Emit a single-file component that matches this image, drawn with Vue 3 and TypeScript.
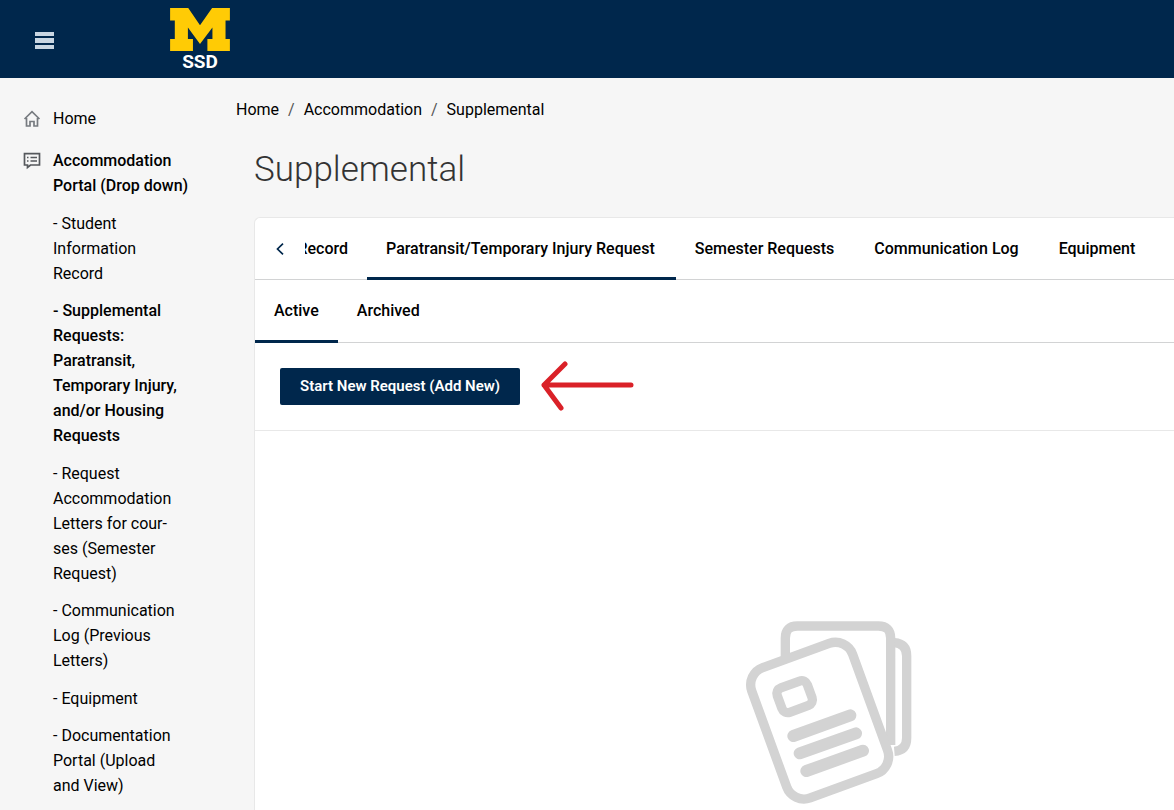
<script setup lang="ts">
import { ref } from 'vue'

interface NavItem {
  label: string
  current?: boolean
}

const portalItems: NavItem[] = [
  { label: '- Student Information Record' },
  { label: '- Supplemental Requests: Paratransit, Temporary Injury, and/or Housing Requests', current: true },
  { label: '- Request Accommodation Letters for cour\u00ADses (Semester Request)' },
  { label: '- Communication Log (Previous Letters)' },
  { label: '- Equipment' },
  { label: '- Documentation Portal (Upload and View)' },
]

const tabs = [
  'Paratransit/Temporary Injury Request',
  'Semester Requests',
  'Communication Log',
  'Equipment',
]
const activeTab = ref(tabs[0])

const subTabs = ['Active', 'Archived']
const activeSubTab = ref(subTabs[0])
</script>

<template>
  <div class="page">
    <header class="topbar">
      <button class="menu-button" type="button" aria-label="Menu">
        <svg width="19" height="17" viewBox="0 0 19 17" aria-hidden="true">
          <path d="M0 0H19V4H0ZM0 6H19V11H0ZM0 13H19V17H0Z" />
        </svg>
      </button>
      <a class="logo" href="#" aria-label="SSD home">
        <svg width="60" height="43" viewBox="512 24 178 128" aria-hidden="true">
          <path
            d="M512 24H566L601 75L637 24H690V61H677V116H690V152H623V116H638V82L601 131L565 82V116H580V152H512V116H526V61H512Z"
          />
        </svg>
        <span>SSD</span>
      </a>
    </header>

    <div class="body">
      <nav class="sidebar" aria-label="Main">
        <a class="nav-link" href="#">
          <svg class="nav-icon home" width="18" height="18" viewBox="0 0 18 18" aria-hidden="true">
            <path d="M1.500 9L9 1.700L16.500 9M3.500 8V16H7V11.500H11V16H14.500V8" />
          </svg>
          <span>Home</span>
        </a>
        <a class="nav-link strong" href="#">
          <svg class="nav-icon" width="18" height="18" viewBox="0 0 18 18" aria-hidden="true">
            <path d="M1.500 1.700H16.500V13H7.500L4.500 15.500V13H1.500Z" />
            <path d="M4 5.500H5.500M7.500 5.500H14M4 9H5.500M7.500 9H14" />
          </svg>
          <span>Accommodation Portal (Drop down)</span>
        </a>
        <ul class="sub-nav">
          <li v-for="item in portalItems" :key="item.label">
            <a href="#" :class="{ strong: item.current }">{{ item.label }}</a>
          </li>
        </ul>
      </nav>

      <main class="content">
        <nav class="breadcrumb" aria-label="Breadcrumb">
          <a href="#">Home</a>
          <span class="slash">/</span>
          <a href="#">Accommodation</a>
          <span class="slash">/</span>
          <a href="#">Supplemental</a>
        </nav>
        <h1>Supplemental</h1>

        <section class="card">
          <div class="tabs main-tabs">
            <button class="scroll-button" type="button" aria-label="Previous tabs">
              <svg width="8" height="12" viewBox="0 0 8 12" aria-hidden="true">
                <path d="M7 0.700L1.500 6L7 11.300" />
              </svg>
            </button>
            <button class="tab clipped" type="button"><span>Record</span></button>
            <button
              v-for="tab in tabs"
              :key="tab"
              class="tab"
              :class="{ active: tab === activeTab }"
              type="button"
              @click="activeTab = tab"
            >
              {{ tab }}
            </button>
          </div>
          <div class="tabs sub-tabs">
            <button
              v-for="tab in subTabs"
              :key="tab"
              class="tab"
              :class="{ active: tab === activeSubTab }"
              type="button"
              @click="activeSubTab = tab"
            >
              {{ tab }}
            </button>
          </div>
          <div class="actions">
            <button class="primary" type="button">Start New Request (Add New)</button>
            <svg class="arrow" width="96" height="52" viewBox="0 0 96 52" aria-hidden="true">
              <path d="M91 24H4M25 3L4 24L21 47" />
            </svg>
          </div>
          <div class="empty">
            <svg width="190" height="200" viewBox="0 0 570 600" aria-hidden="true">
              <path d="M151 142V84Q151 48 187 48H430Q467 48 467 84V405" />
              <path d="M478 98Q515 101 515 138V384Q515 421 478 424" />
              <g transform="translate(254 332) rotate(-20)">
                <rect x="-161" y="-208" width="322" height="416" rx="55" />
              </g>
              <g transform="translate(179 260) rotate(-20)">
                <rect x="-48" y="-39" width="96" height="78" rx="18" />
              </g>
              <path class="lines" d="M175 378L346 316M194 430L363 370M214 483L384 422" />
            </svg>
          </div>
        </section>
      </main>
    </div>
  </div>
</template>

<style>
body {
  margin: 0;
  background: #f6f6f6;
}
</style>

<style scoped>
.page {
  display: flex;
  flex-direction: column;
  height: 100vh;
  overflow: hidden;
  background: #f6f6f6;
  color: #000;
  font-family: Roboto, "Liberation Sans", sans-serif;
  font-size: 16px;
  line-height: 25px;
}

a {
  color: inherit;
  text-decoration: none;
}

button {
  border: 0;
  padding: 0;
  background: none;
  color: inherit;
  font: inherit;
  cursor: pointer;
}

svg {
  flex: none;
  display: block;
}

.topbar {
  display: flex;
  align-items: center;
  flex: none;
  height: 78px;
  padding-left: 35px;
  background: #00274c;
}

.menu-button {
  margin-top: 3px;
  fill: #c9d6e2;
}

.logo {
  display: flex;
  flex-direction: column;
  align-items: center;
  align-self: flex-start;
  margin-left: 116px;
  padding-top: 8px;
  color: #fff;
  font-size: 19px;
  font-weight: 700;
  line-height: 22px;
}

.logo svg {
  fill: #ffcb05;
}

.body {
  display: flex;
  flex: 1;
  min-height: 0;
}

.sidebar {
  flex: none;
  box-sizing: border-box;
  width: 236px;
  padding: 28px 40px 0 23px;
}

.nav-link {
  display: flex;
  gap: 12px;
  margin-bottom: 17px;
}

.nav-icon {
  margin-top: 4px;
  fill: none;
  stroke: #55585c;
  stroke-width: 1.7;
}

.nav-icon.home {
  stroke: #777b80;
}

.strong {
  font-weight: 500;
}

.sub-nav {
  margin: -4px 0 0;
  padding: 0 12px 0 30px;
  list-style: none;
}

.sub-nav li {
  margin-bottom: 12px;
}

.sub-nav li:nth-child(even) {
  margin-bottom: 13px;
}

.content {
  flex: 1;
  display: flex;
  flex-direction: column;
  min-width: 0;
}

.breadcrumb {
  display: flex;
  gap: 9px;
  padding-top: 19px;
}

.slash {
  color: #555;
}

h1 {
  margin: 26px 0 25px 18px;
  color: #333;
  font-size: 35px;
  font-weight: 300;
  line-height: 44px;
}

.card {
  flex: 1;
  margin-left: 18px;
  border: 1px solid #e8e8e8;
  border-right: 0;
  border-bottom: 0;
  border-radius: 6px 0 0 0;
  background: #fff;
  overflow: hidden;
}

.tabs {
  display: flex;
  box-sizing: border-box;
  border-bottom: 1px solid #d2d3d4;
}

.main-tabs {
  height: 62px;
}

.sub-tabs {
  height: 63px;
}

.scroll-button {
  flex: none;
  display: flex;
  align-items: center;
  justify-content: center;
  width: 50px;
}

.scroll-button svg {
  fill: none;
  stroke: #00274c;
  stroke-width: 1.7;
}

.tab {
  flex: none;
  box-sizing: border-box;
  margin-bottom: -1px;
  padding: 1px 19px 0;
  border-bottom: 3px solid transparent;
  font-weight: 500;
  white-space: nowrap;
}

.main-tabs .tab {
  padding-right: 21px;
}

.tab.active {
  border-bottom-color: #00274c;
}

.main-tabs .clipped {
  display: flex;
  align-items: center;
  justify-content: flex-end;
  width: 62px;
  padding-right: 19px;
  padding-left: 0;
}

.clipped span {
  display: flex;
  justify-content: flex-end;
  width: 43px;
  overflow: hidden;
}

.actions {
  display: flex;
  align-items: center;
  gap: 20px;
  box-sizing: border-box;
  height: 88px;
  padding-left: 25px;
  border-bottom: 1px solid #e8e8e8;
}

.primary {
  height: 37px;
  padding: 0 20px;
  border-radius: 2px;
  background: #00274c;
  color: #fff;
  font-size: 15px;
  font-weight: 600;
}

.arrow {
  fill: none;
  stroke: #da2128;
  stroke-width: 5;
  stroke-linecap: round;
  stroke-linejoin: round;
}

.empty {
  display: flex;
  justify-content: center;
  padding: 179px 0 0 230px;
}

.empty svg {
  fill: none;
  stroke: #d3d3d3;
  stroke-width: 28;
}

.empty .lines {
  stroke-width: 36;
  stroke-linecap: round;
}
</style>
